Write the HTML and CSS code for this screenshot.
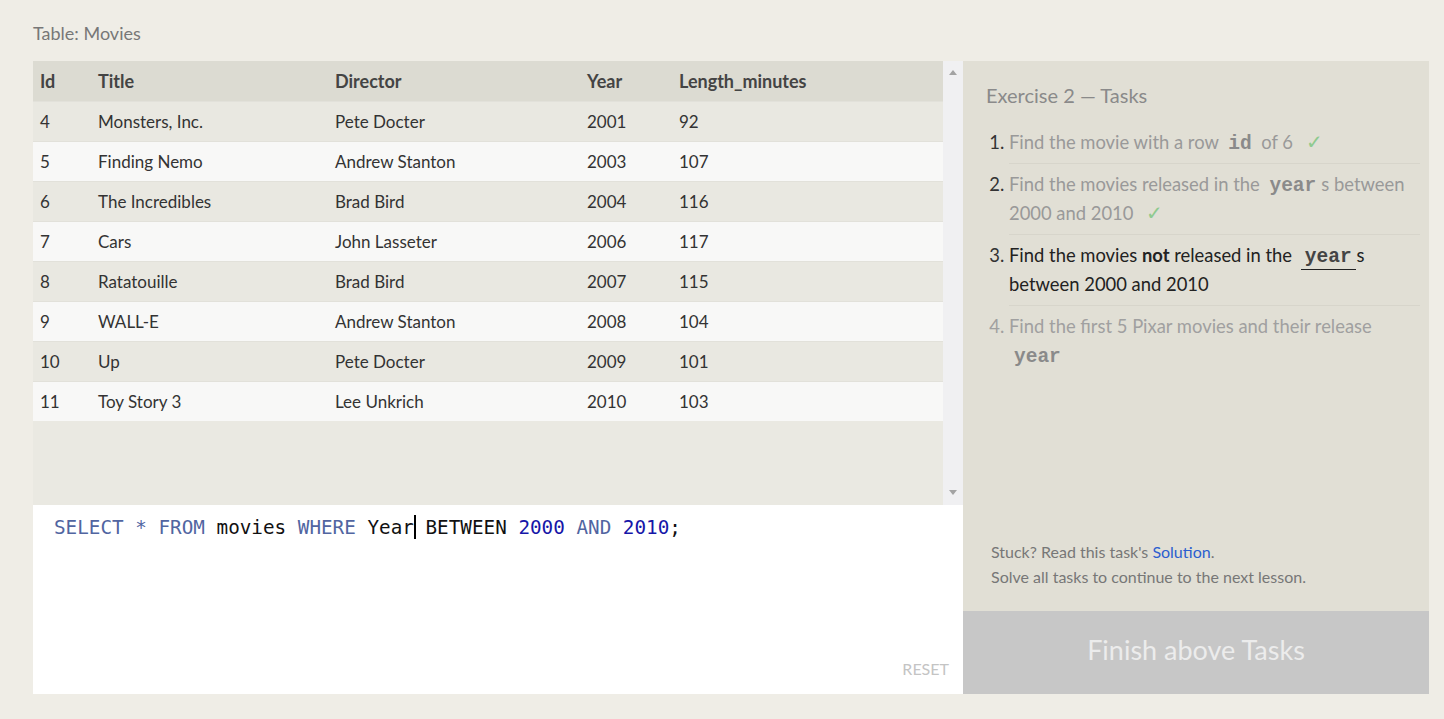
FILE: index.html
```html
<!DOCTYPE html>
<html>
<head>
<meta charset="utf-8">
<title>SQL Exercise</title>
<link rel="stylesheet" href="styles.css">
</head>
<body>
<div class="page">
  <div class="caption">Table: Movies</div>
  <div class="workspace">
    <div class="left">
      <div class="results">
        <div class="table-wrap">
          <table class="grid">
            <colgroup>
              <col class="c-id"><col class="c-title"><col class="c-dir"><col class="c-year"><col class="c-len">
            </colgroup>
            <thead>
              <tr><th>Id</th><th>Title</th><th>Director</th><th>Year</th><th>Length_minutes</th></tr>
            </thead>
            <tbody>
              <tr><td>4</td><td>Monsters, Inc.</td><td>Pete Docter</td><td>2001</td><td>92</td></tr>
              <tr><td>5</td><td>Finding Nemo</td><td>Andrew Stanton</td><td>2003</td><td>107</td></tr>
              <tr><td>6</td><td>The Incredibles</td><td>Brad Bird</td><td>2004</td><td>116</td></tr>
              <tr><td>7</td><td>Cars</td><td>John Lasseter</td><td>2006</td><td>117</td></tr>
              <tr><td>8</td><td>Ratatouille</td><td>Brad Bird</td><td>2007</td><td>115</td></tr>
              <tr><td>9</td><td>WALL-E</td><td>Andrew Stanton</td><td>2008</td><td>104</td></tr>
              <tr><td>10</td><td>Up</td><td>Pete Docter</td><td>2009</td><td>101</td></tr>
              <tr><td>11</td><td>Toy Story 3</td><td>Lee Unkrich</td><td>2010</td><td>103</td></tr>
            </tbody>
          </table>
        </div>
        <div class="scrollbar">
          <span class="arrow up"></span>
          <span class="arrow down"></span>
        </div>
      </div>
      <div class="editor">
        <div class="code"><span class="kw">SELECT</span> <span class="op">*</span> <span class="kw">FROM</span> movies <span class="kw">WHERE</span> Year<span class="cursor"></span> BETWEEN <span class="num">2000</span> <span class="kw">AND</span> <span class="num">2010</span>;</div>
        <div class="reset">RESET</div>
      </div>
    </div>
    <div class="right">
      <div class="tasks">
        <h2 class="tasks-title">Exercise 2 — Tasks</h2>
        <ol class="task-list">
          <li class="done">Find the movie with a row <code>id</code> of 6 <span class="check">✓</span></li>
          <li class="done">Find the movies released in the <code>year</code>s between 2000 and 2010 <span class="check">✓</span></li>
          <li class="active">Find the movies <b>not</b> released in the <code class="under">year</code>s between 2000 and 2010</li>
          <li class="todo">Find the first 5 Pixar movies and their release <code>year</code></li>
        </ol>
        <div class="help">
          <p>Stuck? Read this task's <a href="#">Solution</a>.</p>
          <p>Solve all tasks to continue to the next lesson.</p>
        </div>
      </div>
      <div class="finish">Finish above Tasks</div>
    </div>
  </div>
</div>
</body>
</html>
```
FILE: styles.css
```css
html, body {
  margin: 0;
  padding: 0;
  background: #efede6;
  font-family: Lato, "Open Sans", "Liberation Sans", sans-serif;
}

.page {
  padding: 22px 15px 25px 33px;
}

.caption {
  font-size: 18px;
  color: #777;
  line-height: 22px;
  margin-bottom: 17px;
}

.workspace {
  display: flex;
  width: 1396px;
}

.left {
  width: 930px;
  display: flex;
  flex-direction: column;
}

.results {
  height: 444px;
  display: flex;
  background: #eae9e2;
}

.table-wrap {
  flex: 1;
}

.grid {
  width: 910px;
  border-collapse: collapse;
  table-layout: fixed;
  font-size: 17px;
}

.c-id { width: 58px; }
.c-title { width: 237px; }
.c-dir { width: 252px; }
.c-year { width: 92px; }

.grid th {
  height: 40px;
  background: #dcdbd2;
  color: #444;
  font-weight: bold;
  text-align: left;
  padding: 0 0 0 7px;
  font-size: 18px;
}

.grid td {
  height: 39px;
  padding: 0 0 0 7px;
  color: #333;
  border-top: 1px solid #e2e1da;
}

.grid tbody tr:nth-child(odd) td {
  background: #e9e8e1;
}

.grid tbody tr:nth-child(even) td {
  background: #f8f8f7;
}

.scrollbar {
  width: 20px;
  background: #f0f0f2;
  display: flex;
  flex-direction: column;
  justify-content: space-between;
  align-items: center;
  padding: 9px 0 10px;
  box-sizing: border-box;
}

.arrow {
  width: 0;
  height: 0;
  border-left: 4px solid transparent;
  border-right: 4px solid transparent;
}

.arrow.up {
  border-bottom: 5px solid #a3a3a3;
}

.arrow.down {
  border-top: 5px solid #a3a3a3;
}

.editor {
  height: 189px;
  background: #fff;
  display: flex;
  flex-direction: column;
  justify-content: space-between;
  padding: 10px 14px 15px 21px;
  box-sizing: border-box;
}

.code {
  font-family: "DejaVu Sans Mono", "Liberation Mono", monospace;
  font-size: 19.3px;
  line-height: 26px;
  color: #111;
  white-space: pre;
}

.kw { color: #5165a1; }
.op { color: #5165a1; }
.num { color: #1616a8; }

.cursor {
  display: inline-block;
  width: 2px;
  height: 24px;
  background: #000;
  vertical-align: -5px;
  margin-right: -2px;
}

.reset {
  align-self: flex-end;
  font-size: 16px;
  color: #c4c4c4;
  line-height: 20px;
}

.right {
  width: 466px;
  display: flex;
  flex-direction: column;
}

.tasks {
  height: 550px;
  background: #e1dfd5;
  padding: 21px 9px 22px 23px;
  box-sizing: border-box;
  display: flex;
  flex-direction: column;
}

.tasks-title {
  margin: 0;
  font-size: 20px;
  font-weight: normal;
  color: #8a8a8a;
  line-height: 26px;
}

.task-list {
  margin: 14px 0 0;
  padding: 0 0 0 23px;
  font-size: 18.4px;
  line-height: 29px;
}

.task-list li {
  padding: 6px 0;
  border-top: 1px solid #d7d5cb;
}

.task-list li:first-child {
  border-top: none;
}

.task-list li::marker {
  color: #333;
}

.task-list li.done { color: #999; }
.task-list li.active { color: #222; }
.task-list li.todo { color: #a0a0a0; }
.task-list li.todo::marker { color: #a0a0a0; }

.task-list code {
  font-family: "Liberation Mono", "DejaVu Sans Mono", monospace;
  font-weight: bold;
  font-size: 19.5px;
  line-height: 0;
  margin: 0 5px;
  color: #8a8a8a;
}

.task-list li.active code {
  color: #444;
}

.task-list code.under {
  margin: 0 1px 0 4px;
  padding: 0 4px 1px;
  border-bottom: 1px solid #222;
}

.task-list b {
  font-weight: bold;
}

.check {
  color: #8fca8f;
  font-size: 20px;
  line-height: 0;
  margin-left: 8px;
}

.help {
  margin-top: auto;
  padding-left: 5px;
  font-size: 16px;
  line-height: 25px;
  color: #777;
}

.help p {
  margin: 0;
}

.help a {
  color: #2c5ecf;
  text-decoration: none;
}

.finish {
  height: 83px;
  background: #c7c7c7;
  color: #ececec;
  font-size: 27px;
  display: flex;
  align-items: center;
  justify-content: center;
  padding-bottom: 6px;
  box-sizing: border-box;
}
```
